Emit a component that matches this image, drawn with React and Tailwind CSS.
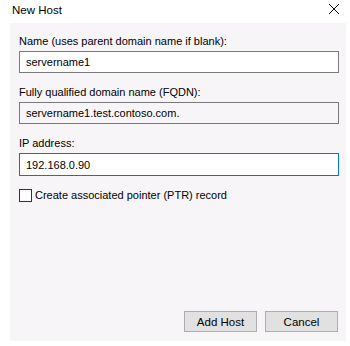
export default function App() {
  const font = { fontFamily: '"Liberation Sans", Arial, sans-serif' };
  return (
    <div className="w-[350px] h-[346px] bg-white flex flex-col text-[11px] text-black" style={font}>
      <div className="h-[23px] flex items-start justify-between pl-[12px] pr-[10px]">
        <span className="mt-[2px] text-[11.5px] leading-[16px]">New Host</span>
        <svg width="12" height="12" viewBox="0 0 12 12" className="mt-[3px]">
          <path d="M1 1 L11 11 M11 1 L1 11" stroke="#000" strokeWidth="1" />
        </svg>
      </div>
      <div className="ml-[10px] w-[336px] h-[318px] bg-[#f8f5f8] flex flex-col pl-[9px] pr-[7px] pt-[10px]">
        <div className="leading-[16px]">Name (uses parent domain name if blank):</div>
        <div className="mt-[2px] h-[22px] border border-[#7a7a7a] bg-white flex items-center px-[6px] leading-[16px]">servername1</div>
        <div className="mt-[11px] leading-[16px]">Fully qualified domain name (FQDN):</div>
        <div className="mt-[2px] h-[22px] border border-[#7a7a7a] bg-[#f8f5f8] flex items-center px-[6px] leading-[16px]">servername1.test.contoso.com.</div>
        <div className="mt-[11px] leading-[16px]">IP address:</div>
        <div className="mt-[2px] h-[23px] border border-[#0078d7] bg-white flex items-center px-[6px] leading-[16px]">192.168.0.90</div>
        <div className="mt-[11px] flex items-center gap-[3px] leading-[16px]">
          <div className="w-[13px] h-[13px] border border-[#333] bg-white" />
          <span>Create associated pointer (PTR) record</span>
        </div>
        <div className="flex-1" />
        <div className="flex justify-end gap-[8px] pr-[1px] mb-[9px]">
          <button className="w-[73px] h-[21px] bg-[#e1e1e1] border border-[#adadad] text-[11.5px] leading-[16px]">Add Host</button>
          <button className="w-[73px] h-[21px] bg-[#e1e1e1] border border-[#adadad] text-[11.5px] leading-[16px]">Cancel</button>
        </div>
      </div>
    </div>
  );
}
